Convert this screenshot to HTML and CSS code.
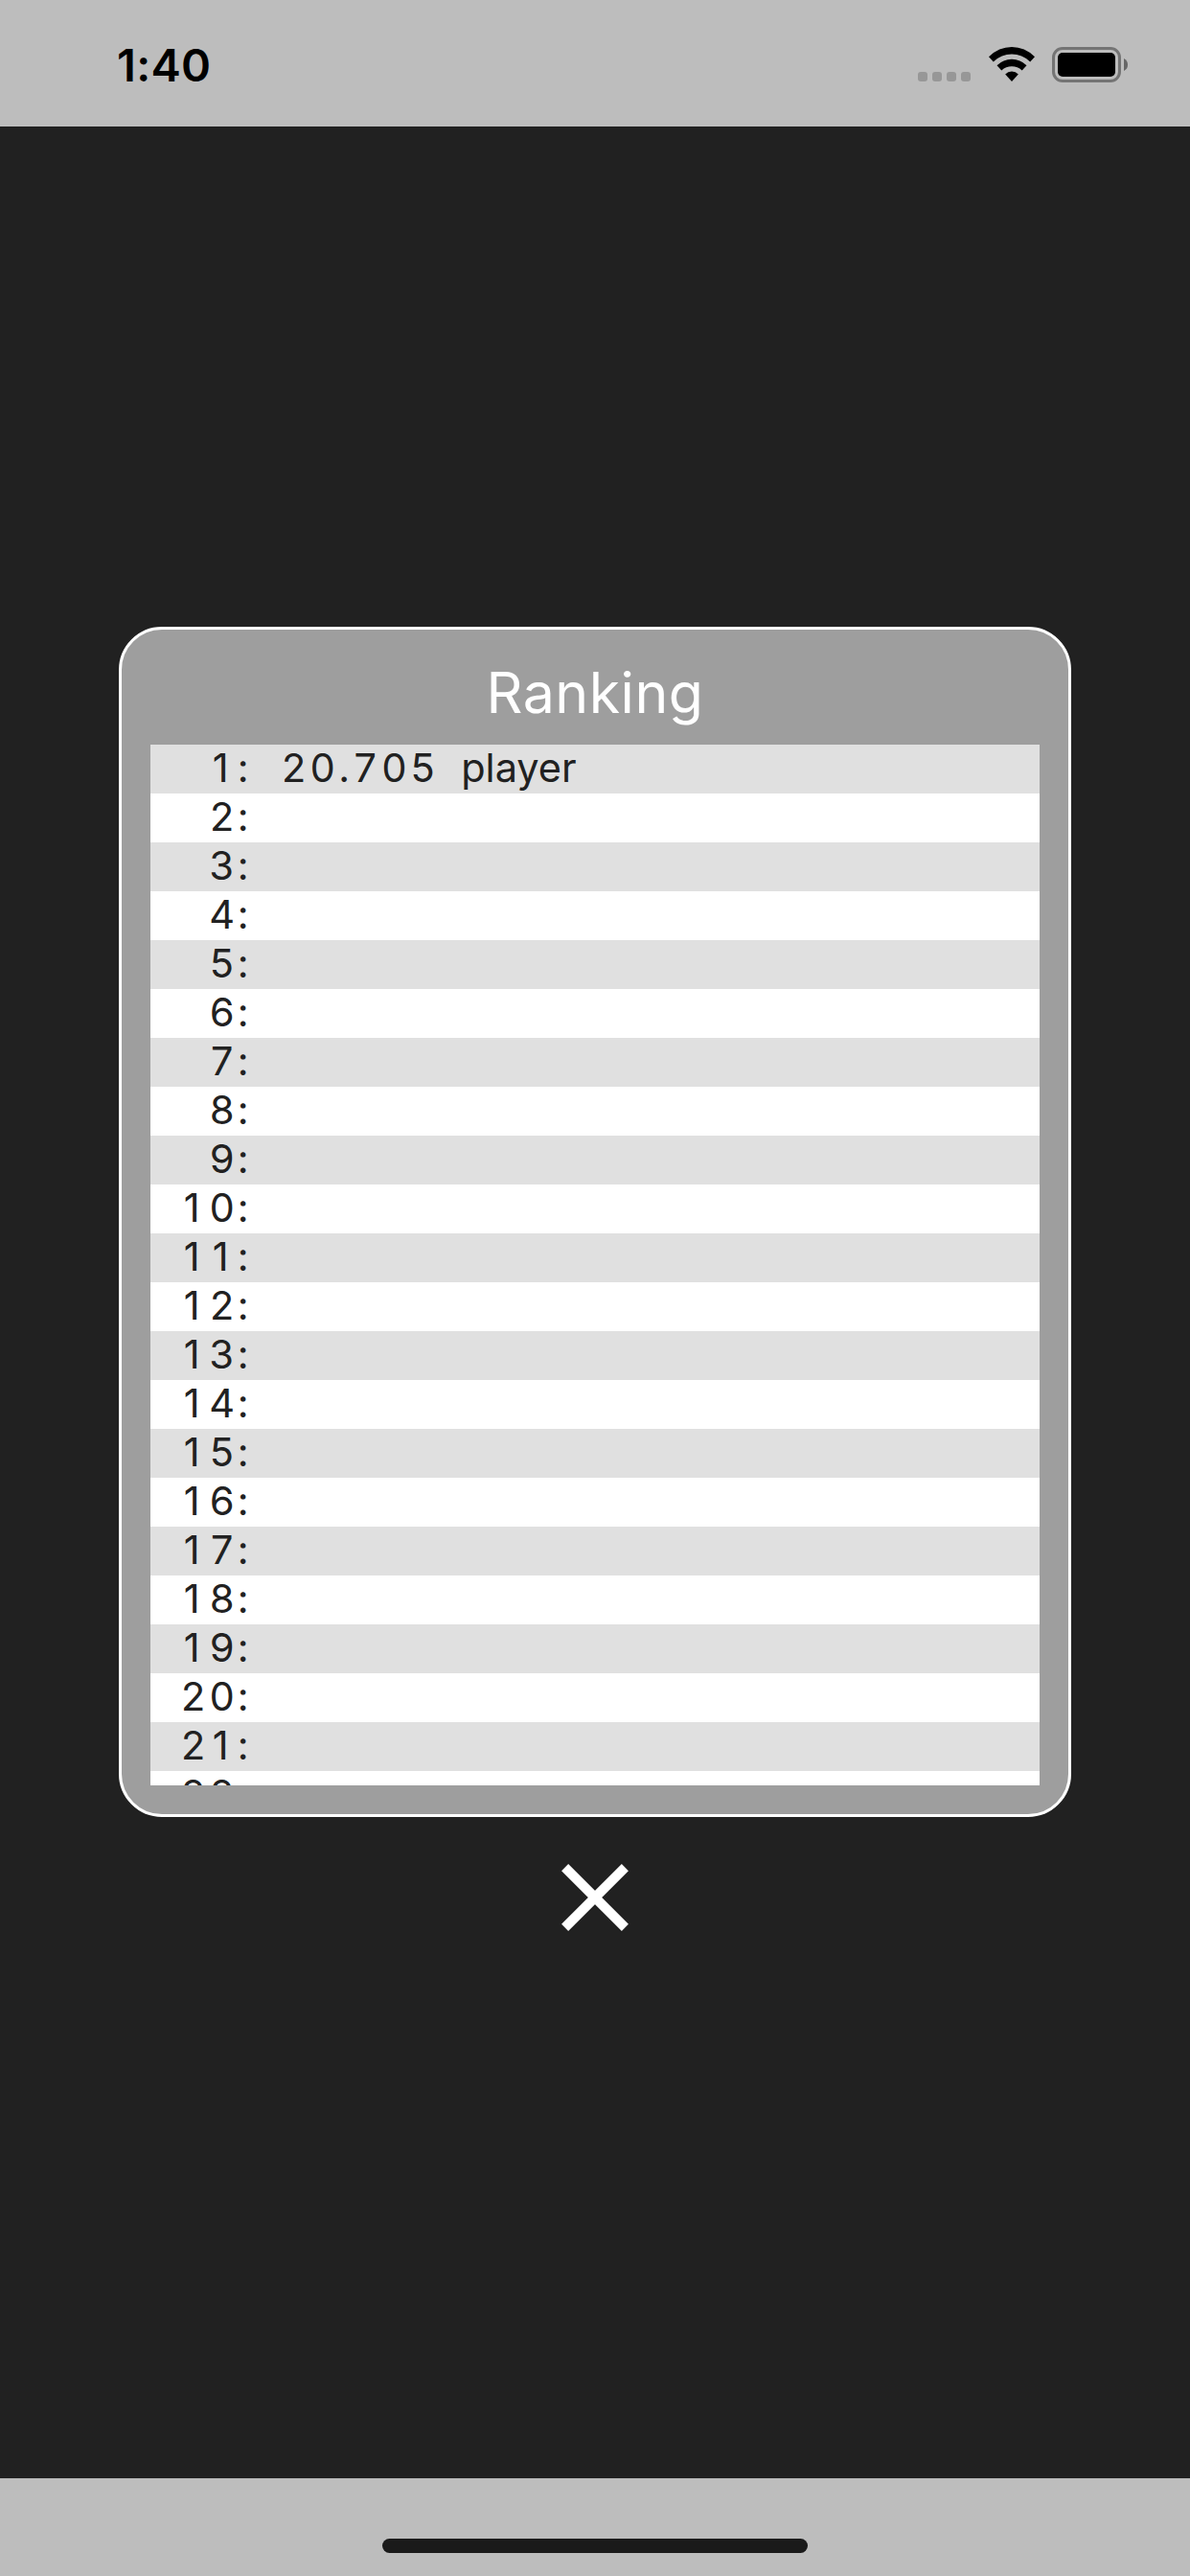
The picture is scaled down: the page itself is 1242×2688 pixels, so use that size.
FILE: index.html
```html
<!DOCTYPE html>
<html lang="en">
<head>
<meta charset="utf-8">
<title>Ranking</title>
<link rel="stylesheet" href="styles.css">
</head>
<body>
<header class="status-bar">
  <time class="clock">1:40</time>
  <div class="indicators">
    <div class="signal"><i></i><i></i><i></i><i></i></div>
    <svg class="wifi" width="48" height="36" viewBox="0 0 48 36">
      <path d="M0 10.2Q10.5 0 24 0T48 10.2L43.2 15.4Q34.8 7.5 24 7.5T4.8 15.4Z"/>
      <path d="M8.5 19.3Q15.2 12.8 24 12.8T39.5 19.3L34.7 24.4Q30 20.3 24 20.3T13.3 24.4Z"/>
      <path d="M17.2 28.4Q20 25.4 24 25.4T30.8 28.4L24 36Z"/>
    </svg>
    <svg class="battery" width="80" height="37" viewBox="0 0 80 37">
      <rect class="battery-case" x="1.5" y="1.5" width="69" height="34" rx="9.5"/>
      <rect x="6" y="6" width="60" height="25" rx="5"/>
      <path class="battery-tip" d="M75 12Q79 14 79 18.5T75 25Z"/>
    </svg>
  </div>
</header>
<main class="screen">
  <section class="card">
    <h1 class="title">Ranking</h1>
    <ol class="list">
      <li><span class="rank"><span class="one">1</span>:</span><span class="score">20.705</span><span class="name">player</span></li>
      <li><span class="rank">2:</span></li>
      <li><span class="rank">3:</span></li>
      <li><span class="rank">4:</span></li>
      <li><span class="rank">5:</span></li>
      <li><span class="rank">6:</span></li>
      <li><span class="rank">7:</span></li>
      <li><span class="rank">8:</span></li>
      <li><span class="rank">9:</span></li>
      <li><span class="rank"><span class="one">1</span>0:</span></li>
      <li><span class="rank"><span class="one">1</span><span class="one">1</span>:</span></li>
      <li><span class="rank"><span class="one">1</span>2:</span></li>
      <li><span class="rank"><span class="one">1</span>3:</span></li>
      <li><span class="rank"><span class="one">1</span>4:</span></li>
      <li><span class="rank"><span class="one">1</span>5:</span></li>
      <li><span class="rank"><span class="one">1</span>6:</span></li>
      <li><span class="rank"><span class="one">1</span>7:</span></li>
      <li><span class="rank"><span class="one">1</span>8:</span></li>
      <li><span class="rank"><span class="one">1</span>9:</span></li>
      <li><span class="rank">20:</span></li>
      <li><span class="rank">2<span class="one">1</span>:</span></li>
      <li><span class="rank">22:</span></li>
    </ol>
  </section>
  <button class="close" aria-label="Close">
    <svg width="70" height="70" viewBox="0 0 70 70"><path d="M3.6 3.6L66.4 66.4M66.4 3.6L3.6 66.4"/></svg>
  </button>
</main>
<footer class="home-area"><div class="home-indicator"></div></footer>
</body>
</html>
```

FILE: styles.css
```css
* { box-sizing: border-box; }
body {
  margin: 0;
  height: 2688px;
  display: flex;
  flex-direction: column;
  overflow: hidden;
  background: #212121;
  color: #212121;
  font-family: Inter, "Liberation Sans", sans-serif;
}
.status-bar {
  height: 132px;
  flex: none;
  display: flex;
  justify-content: space-between;
  padding: 39px 64px 0 122px;
  background: #bdbdbd;
  color: #000;
}
.clock {
  font-size: 47px;
  font-weight: 600;
  line-height: 58px;
  letter-spacing: 0.3px;
}
.indicators { display: flex; align-items: flex-start; padding-top: 10px; }
.signal { display: flex; gap: 5px; padding-top: 26px; margin-right: 19px; }
.signal i { width: 10px; height: 10px; border-radius: 3px; background: #979797; }
.wifi { margin-right: 18px; }
.battery-case { fill: none; stroke: #747474; stroke-width: 3; }
.battery-tip { fill: #666; }
.screen {
  flex: 1;
  display: flex;
  flex-direction: column;
  align-items: center;
  padding-top: 522px;
}
.card {
  width: 80%;
  height: 1242px;
  flex: none;
  display: flex;
  flex-direction: column;
  padding: 30px;
  border: 3px solid #fff;
  border-radius: 45px;
  background: #9e9e9e;
}
.title {
  margin: 0;
  height: 90px;
  flex: none;
  color: #fff;
  font-size: 59px;
  font-weight: 400;
  line-height: 72px;
  letter-spacing: 0.5px;
  text-align: center;
}
.list {
  flex: 1;
  min-height: 0;
  margin: 0;
  padding: 0;
  overflow: hidden;
  list-style: none;
  background: #fff;
}
.list li {
  height: 51px;
  display: flex;
  font-size: 41.5px;
  line-height: 49px;
  white-space: nowrap;
}
.list li:nth-child(odd) { background: #e0e0e0; }
.rank, .score { letter-spacing: 3px; font-variant-numeric: tabular-nums; }
.rank { width: 105px; text-align: right; }
/* plain 1 without a foot, padded to the width of a tabular digit */
.one { font-variant-numeric: normal; padding: 0 6.5px 0 3.5px; }
.score { margin-left: 31px; width: 188px; letter-spacing: 3.2px; }
.close {
  display: flex;
  margin-top: 49px;
  padding: 0;
  border: 0;
  background: none;
}
.close path { fill: none; stroke: #fff; stroke-width: 10; }
.home-area {
  height: 102px;
  flex: none;
  display: flex;
  justify-content: center;
  align-items: flex-start;
  padding-top: 63px;
  background: #bdbdbd;
}
.home-indicator { width: 444px; height: 15px; border-radius: 8px; background: #1a1a1a; }
```
